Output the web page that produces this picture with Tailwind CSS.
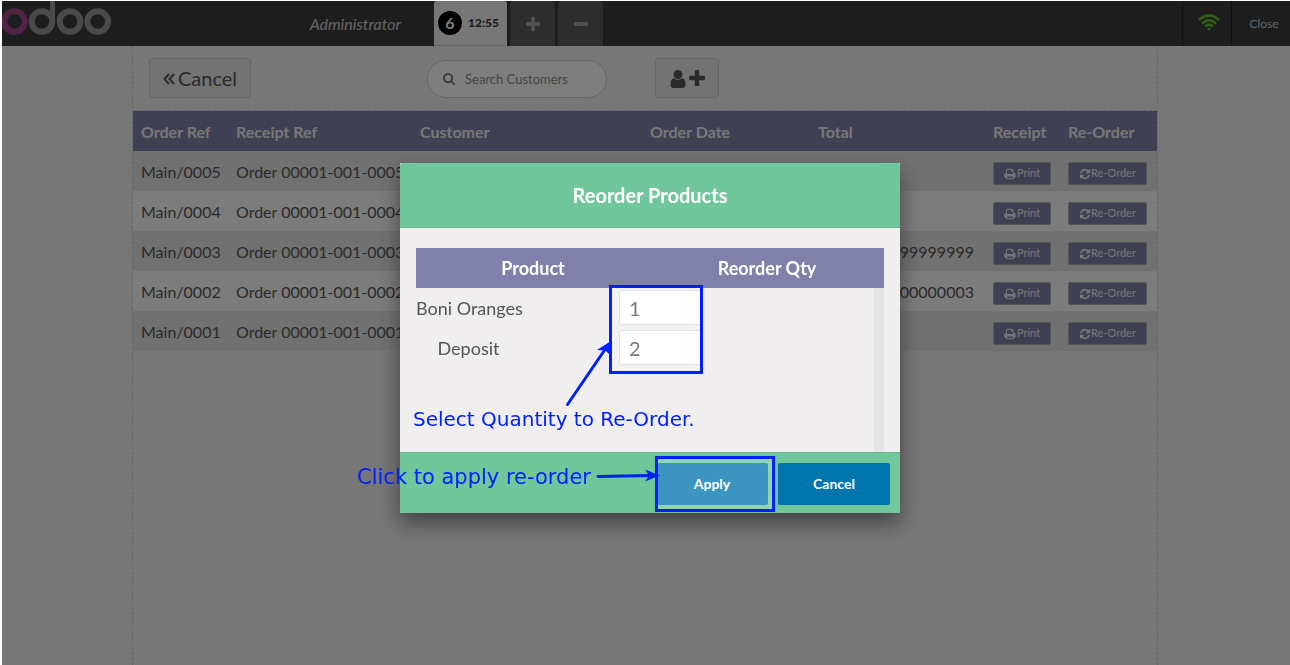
<!DOCTYPE html>
<html lang="en">
<head>
<meta charset="utf-8">
<title>Point of Sale - Orders</title>
<script src="https://cdn.jsdelivr.net/npm/@tailwindcss/browser@4"></script>
</head>
<body class="bg-white font-[Lato,sans-serif] text-[#555]">
<svg class="hidden" aria-hidden="true">
  <symbol id="plus" viewBox="192 128 1408 1408"><path d="M1600 736v192q0 40-28 68t-68 28h-416v416q0 40-28 68t-68 28h-192q-40 0-68-28t-28-68v-416h-416q-40 0-68-28t-28-68v-192q0-40 28-68t68-28h416v-416q0-40 28-68t68-28h192q40 0 68 28t28 68v416h416q40 0 68 28t28 68z"/></symbol>
  <symbol id="minus" viewBox="192 128 1408 1408"><path d="M1600 736v192q0 40-28 68t-68 28h-1216q-40 0-68-28t-28-68v-192q0-40 28-68t68-28h1216q40 0 68 28t28 68z"/></symbol>
  <symbol id="search" viewBox="64 128 1664 1664"><path d="M1216 832q0-185-131.5-316.5t-316.5-131.5-316.5 131.5-131.5 316.5 131.5 316.5 316.5 131.5 316.5-131.5 131.5-316.5zm512 832q0 52-38 90t-90 38q-54 0-90-38l-343-342q-179 124-399 124-143 0-273.5-55.5t-225-150-150-225-55.5-273.5 55.5-273.5 150-225 225-150 273.5-55.5 273.5 55.5 225 150 150 225 55.5 273.5q0 220-124 399l343 343q37 37 37 90z"/></symbol>
  <symbol id="user" viewBox="256 128 1280 1536"><path d="M1536 1399q0 109-62.5 187t-150.5 78h-854q-88 0-150.5-78t-62.5-187q0-85 8.5-160.5t31.5-152 58.5-131 94-89 134.5-34.5q131 128 313 128t313-128q76 0 134.5 34.5t94 89 58.5 131 31.5 152 8.5 160.5zm-256-887q0 159-112.5 271.5t-271.5 112.5-271.5-112.5-112.5-271.5 112.5-271.5 271.5-112.5 271.5 112.5 112.5 271.5z"/></symbol>
  <symbol id="print" viewBox="0 0 1792 1792"><path d="M448 1536h896v-256h-896v256zm0-640h896v-384h-160q-40 0-68-28t-28-68v-160h-640v640zm1152 64q0-26-19-45t-45-19-45 19-19 45 19 45 45 19 45-19 19-45zm128 0v416q0 13-9.500 22.500t-22.500 9.500h-224v160q0 40-28 68t-68 28h-960q-40 0-68-28t-28-68v-160h-224q-13 0-22.500-9.500t-9.500-22.500v-416q0-79 56.500-135.500t135.500-56.500h64v-544q0-40 28-68t68-28h672q40 0 88 20t76 48l152 152q28 28 48 76t20 88v256h64q79 0 135.500 56.500t56.500 135.500z"/></symbol>
  <symbol id="refresh" viewBox="0 0 1792 1792"><path d="M1639 1056q0 5-1 7-64 268-268 434.500t-478 166.500q-146 0-282.500-55t-243.500-157l-129 129q-19 19-45 19t-45-19-19-45v-448q0-26 19-45t45-19h448q26 0 45 19t19 45-19 45l-137 137q71 66 161 102t187 36q134 0 250-65t186-179q11-17 53-117 8-23 30-23h192q13 0 22.500 9.500t9.500 22.500zm25-800v448q0 26-19 45t-45 19h-448q-26 0-45-19t-19-45 19-45l138-138q-148-137-349-137-134 0-250 65t-186 179q-11 17-53 117-8 23-30 23h-199q-13 0-22.500-9.500t-9.500-22.500v-7q65-268 270-434.500t480-166.500q146 0 284 55.500t245 156.500l130-129q19-19 45-19t45 19 19 45z"/></symbol>
</svg>

<div class="flex min-h-screen flex-col border-l-2 border-t border-white bg-[#efeeee]">
  <header class="flex h-[45px] bg-[#3a3a3a]">
    <div class="flex w-[432px] items-center justify-between pr-[33px]">
      <svg class="h-[45px] w-[112px]" viewBox="2 1 112 45" fill="none" stroke="#949494" stroke-width="6" role="img" aria-label="odoo">
        <circle cx="14.500" cy="21.500" r="10.300" stroke="#a2498c"/>
        <circle cx="42" cy="21.500" r="10.300"/>
        <path d="M52.500 21.500V1" stroke-width="5"/>
        <circle cx="70" cy="21.500" r="10.300"/>
        <circle cx="97.700" cy="21.500" r="10.300"/>
      </svg>
      <span class="text-base italic text-[#ccc]">Administrator</span>
    </div>
    <div class="flex gap-[3px]">
      <button class="flex w-[73px] items-center gap-[6px] rounded-t-[3px] border-b border-[#ccc] bg-[#efeeee] pl-1 text-xs font-black text-[#3c3c3c]">
        <span class="flex size-6 items-center justify-center rounded-full bg-black text-base font-bold text-white">6</span>12:55
      </button>
      <button class="flex w-[45px] items-center justify-center rounded-t-[3px] bg-[#5a5a5a] pt-px text-[#a0a0a0]" aria-label="New order"><svg class="size-[14px] fill-current"><use href="#plus"/></svg></button>
      <button class="flex w-[45px] items-center justify-center rounded-t-[3px] bg-[#5a5a5a] pt-px text-[#a0a0a0]" aria-label="Delete order"><svg class="size-[14px] fill-current"><use href="#minus"/></svg></button>
    </div>
    <div class="ml-auto flex">
      <div class="flex w-[49px] items-center justify-center border-l border-[#202020] pl-1 pb-[3px]">
        <svg class="h-[17px] w-[22px]" viewBox="0 0 22 17" fill="none" stroke="#5eb937" stroke-width="2.700" role="img" aria-label="Connected">
          <path d="M1 6Q11-3 21 6"/><path d="M4 9.500Q11 3 18 9.500"/><path d="M7.200 12.500Q11 9 14.800 12.500"/><path d="M9 14.500Q11 12.800 13 14.500L11 16.800Z" fill="#5eb937" stroke="none"/>
        </svg>
      </div>
      <button class="w-[59px] border-l border-[#202020] pl-[6px] text-xs text-[#ccc]">Close</button>
    </div>
  </header>

  <main class="flex grow flex-col pr-[2px]">
    <div class="mx-auto w-full max-w-[1026px] grow border-x border-dashed border-[#ccc]">
      <div class="flex h-[65px] items-start border-b border-dashed border-[#ccc] pl-4 pt-3">
        <button class="flex h-10 w-[102px] items-center justify-center gap-[3px] rounded-[3px] border border-[#ccc] bg-[#e6e6e6] text-xl">
          <svg class="mt-[2px] size-3" viewBox="0 0 12 12" fill="none" stroke="currentColor" stroke-width="2"><path d="M6 1L1.500 6L6 11M11 1L6.500 6L11 11"/></svg>Cancel
        </button>
        <label class="mt-[2px] ml-44 flex h-[38px] w-[180px] items-center gap-[10px] rounded-full border border-[#ccc] bg-[#fcfcfc] pl-[15px]">
          <svg class="size-3 shrink-0 fill-[#777]"><use href="#search"/></svg>
          <input class="w-[130px] bg-transparent pt-px text-[13px] placeholder:text-[#8a8a8a]" type="text" placeholder="Search Customers" aria-label="Search Customers">
        </label>
        <button class="ml-12 flex h-10 w-16 items-center justify-center gap-[3px] rounded-[3px] border border-[#ccc] bg-[#e6e6e6]" aria-label="Add customer">
          <svg class="mt-[2px] h-[18px] w-4 fill-current"><use href="#user"/></svg><svg class="size-4 fill-current"><use href="#plus"/></svg>
        </button>
      </div>
      <table class="w-full table-fixed text-left text-base">
        <colgroup><col class="w-[95px]"><col class="w-[184px]"><col class="w-[230px]"><col class="w-[168px]"><col class="w-[175px]"><col class="w-[75px]"><col class="w-[97px]"></colgroup>
        <thead>
          <tr class="h-10 bg-[#8180ab] text-[#efeeee] [&>th]:px-2 [&>th]:pt-[2px]"><th>Order Ref</th><th>Receipt Ref</th><th>Customer</th><th>Order Date</th><th>Total</th><th>Receipt</th><th>Re-Order</th></tr>
        </thead>
        <tbody id="orders"></tbody>
      </table>
    </div>
  </main>
</div>

<template id="order-row">
  <tr class="h-10 odd:bg-[#e3e3e3] even:bg-[#f8f8f8]">
    <td class="px-2 pt-[2px] whitespace-nowrap"></td>
    <td class="px-2 pt-[2px] whitespace-nowrap"></td>
    <td class="px-2"></td>
    <td class="px-2"></td>
    <td class="pt-[2px] pr-[11px] text-right"></td>
    <td class="px-2 pt-1"><button class="flex h-[23px] w-[58px] items-center justify-center gap-px rounded-[2px] border border-[#aaa] bg-[#8180ab] pt-px text-[11px] text-[#efeeee]"><svg class="size-3 fill-current"><use href="#print"/></svg>Print</button></td>
    <td class="px-2 pt-1"><button class="flex h-[23px] w-[79px] items-center justify-center rounded-[2px] border border-[#aaa] bg-[#8180ab] pt-px text-[11px] text-[#efeeee]"><svg class="size-3 fill-current"><use href="#refresh"/></svg>Re-Order</button></td>
  </tr>
</template>
<script>
  const totals = { 3: "99999999999", 2: "00000000003" };
  const template = document.getElementById("order-row");
  for (let n = 5; n > 0; n--) {
    const row = template.content.cloneNode(true);
    const cells = row.querySelectorAll("td");
    cells[0].textContent = "Main/000" + n;
    cells[1].textContent = "Order 00001-001-000" + n;
    cells[4].textContent = totals[n] || "";
    document.getElementById("orders").append(row);
  }
</script>

<div class="fixed top-px right-0 bottom-0 left-[2px] flex items-start justify-center bg-black/50 pt-[162px] pl-2">
  <div role="dialog" aria-labelledby="dialog-title" class="relative flex h-[350px] w-[500px] flex-col bg-[#f0eeee] shadow-[0_10px_20px_rgba(0,0,0,0.45)]">
    <h2 id="dialog-title" class="flex h-[65px] items-center justify-center rounded-t-[2px] border-b border-[#62b98c] bg-[#70c79b] text-xl font-bold text-white">Reorder Products</h2>
    <div class="flex grow flex-col px-4 pt-5">
      <div class="grid h-10 grid-cols-2 items-center bg-[#8180ab] text-center text-lg font-bold text-white"><span>Product</span><span>Reorder Qty</span></div>
      <div class="flex grow">
        <div class="grid grow auto-rows-[40px] grid-cols-[105px_81px] content-start items-center gap-x-[98px] text-center text-lg">
          <label for="qty-oranges" class="whitespace-nowrap">Boni Oranges</label>
          <input id="qty-oranges" type="text" value="1" class="mb-px h-[35px] w-[83px] rounded-[3px] border border-[#ddd] bg-white px-[9px] text-xl text-[#555]">
          <label for="qty-deposit">Deposit</label>
          <input id="qty-deposit" type="text" value="2" class="mb-px h-[35px] w-[83px] rounded-[3px] border border-[#ddd] bg-white px-[9px] text-xl text-[#555]">
        </div>
        <div class="w-[10px] bg-[#e5e4e4]"></div>
      </div>
    </div>
    <div class="flex h-[61px] items-center justify-end gap-[10px] border-t border-[#62b98c] bg-[#70c79b] pt-[2px] pr-[10px] text-sm font-bold text-white">
      <button class="h-[42px] w-28 rounded-[2px] bg-[#0075ad]">Apply</button>
      <button class="h-[42px] w-28 rounded-[2px] bg-[#0075ad]">Cancel</button>
    </div>

    <!-- Callouts drawn over the dialog -->
    <div class="pointer-events-none absolute inset-0 font-['DejaVu_Sans',sans-serif] whitespace-nowrap text-[#0020ff]">
      <div class="absolute top-[122px] left-[209px] h-[89px] w-[94px] border-3 border-current bg-white/20"></div>
      <div class="absolute top-[293px] left-[255px] h-14 w-[120px] border-3 border-current bg-white/23"></div>
      <svg class="absolute inset-0 size-full" viewBox="400 163 500 350" fill="none" stroke="currentColor" stroke-width="3" stroke-linecap="round" aria-hidden="true">
        <path d="M567.500 404.500L606 348M598 476.500L652 475.500"/>
        <path d="M611 341L611 356L605.500 350.500L597 350ZM660 475.500L645 481.500L649 475.500L645 469.500Z" fill="currentColor" stroke="none"/>
      </svg>
      <p class="absolute top-[242px] left-[13px] text-xl">Select Quantity to Re-Order.</p>
      <p class="absolute top-[299px] left-[-43px] text-[21px]">Click to apply re-order</p>
    </div>
  </div>
</div>
</body>
</html>
